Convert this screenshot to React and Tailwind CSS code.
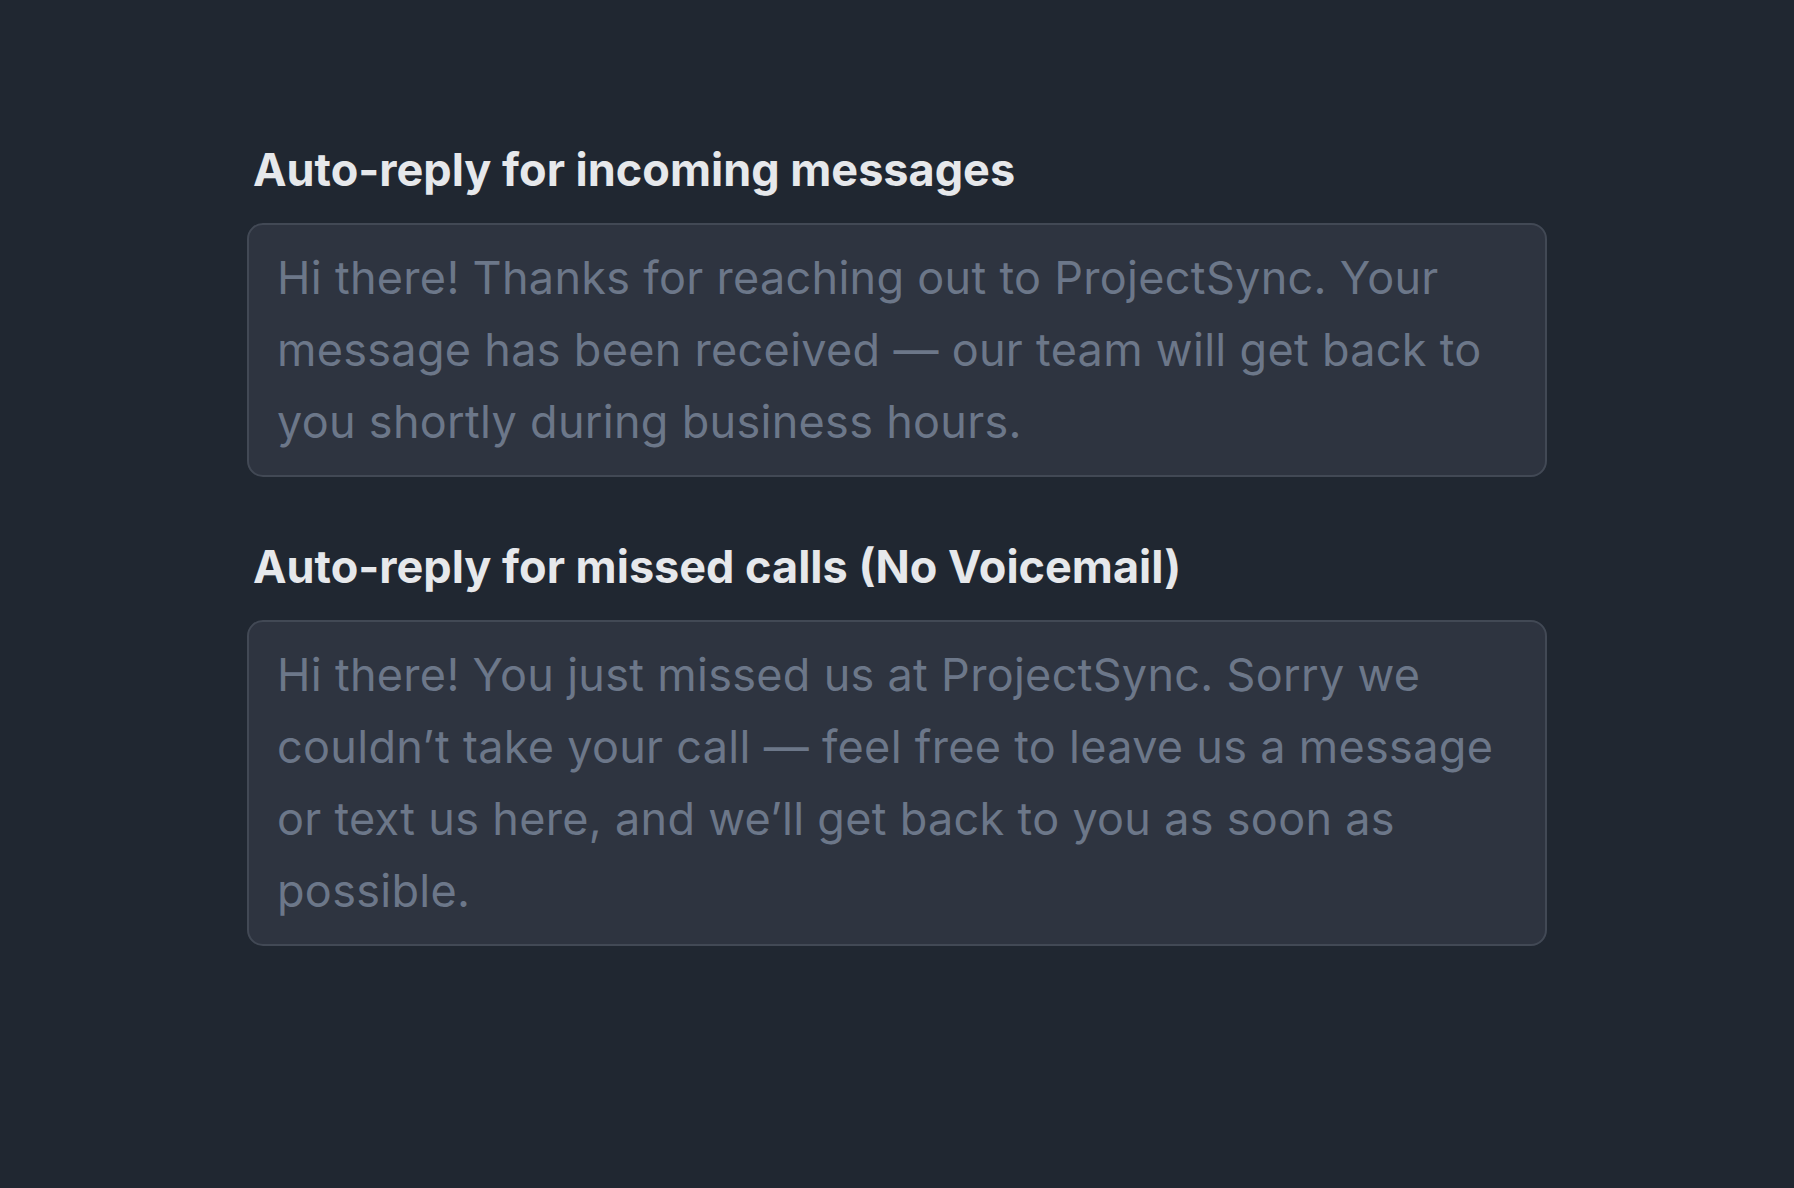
const fields = [
  {
    label: 'Auto-reply for incoming messages',
    text: 'Hi there! Thanks for reaching out to ProjectSync. Your message has been received \u2014 our team will get back to you shortly during business hours.',
  },
  {
    label: 'Auto-reply for missed calls (No Voicemail)',
    text: 'Hi there! You just missed us at ProjectSync. Sorry we couldn\u2019t take your call \u2014 feel free to leave us a message or text us here, and we\u2019ll get back to you as soon as possible.',
  },
]

function ReplyField({ label, text }) {
  return (
    <div className="flex flex-col gap-[25px]">
      <label className="px-[6px] text-[45px] leading-[56px] font-bold text-[#e6e8eb]">{label}</label>
      <div className="rounded-[16px] border-2 border-[#424955] bg-[#2e3440] px-[28px] py-[17px] text-[45px] leading-[72px] tracking-[0.3px] text-[#6c7789]">
        {text}
      </div>
    </div>
  )
}

export default function App() {
  return (
    <div
      className="min-h-[1188px] w-full bg-[#202731] pt-[142px]"
      style={{ fontFamily: 'Inter, "Noto Sans", sans-serif' }}
    >
      <div className="mx-auto flex w-[1300px] flex-col gap-[62px]">
        {fields.map((field) => (
          <ReplyField key={field.label} label={field.label} text={field.text} />
        ))}
      </div>
    </div>
  )
}
